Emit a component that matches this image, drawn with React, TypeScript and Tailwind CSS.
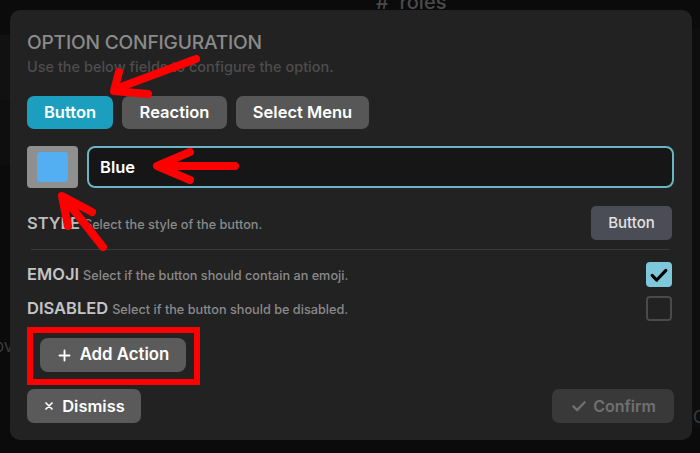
import React from "react";

function Check({ className, w = 3 }: { className?: string; w?: number }) {
  return (
    <svg viewBox="0 0 24 24" className={className} fill="none" stroke="currentColor" strokeWidth={w} strokeLinecap="round" strokeLinejoin="round">
      <path d="M4.5 12.5l5 5L19.5 7" />
    </svg>
  );
}

function Plus({ className }: { className?: string }) {
  return (
    <svg viewBox="0 0 24 24" className={className} fill="none" stroke="currentColor" strokeWidth={3} strokeLinecap="round">
      <path d="M12 4v16M4 12h16" />
    </svg>
  );
}

function Cross({ className }: { className?: string }) {
  return (
    <svg viewBox="0 0 24 24" className={className} fill="none" stroke="currentColor" strokeWidth={3.5} strokeLinecap="round">
      <path d="M6 6l12 12M18 6L6 18" />
    </svg>
  );
}

export default function App() {
  return (
    <div className="relative w-[700px] h-[453px] overflow-hidden bg-[#0b0b0b]" style={{ fontFamily: "Inter, 'Liberation Sans', sans-serif" }}>
      {/* background content hints */}
      <div className="absolute left-0 top-[35px] w-[10px] h-[65px] bg-[#111111]" />
      <div className="absolute left-0 top-[100px] w-[10px] h-[65px] bg-[#0e0e0e]" />
      <div className="absolute left-[692px] top-[28px] w-[8px] h-[400px] bg-[#0e0e0e]" />
      <div className="absolute left-[376px] top-[-13px] text-[20px] text-[#4a4a4a] font-medium">#&nbsp;&nbsp;roles</div>
      <div className="absolute left-[-6px] top-[334px] text-[17px] text-[#3a3a3a]">ov</div>
      <div className="absolute left-[693px] top-[405px] text-[17px] text-[#3a3a3a]">G</div>

      {/* modal */}
      <div className="relative ml-[10px] mt-[10px] w-[682px] h-[430px] rounded-[10px] bg-[#222222] pl-[17px] pr-[18px] pt-[20px] flex flex-col">
        <div className="text-[19.2px] leading-[24px] font-medium text-[#8a8a8a] tracking-[-0.2px]">OPTION CONFIGURATION</div>
        <div className="mt-[5px] text-[14.5px] leading-[16px] text-[#4d4d4d] font-medium">Use the below fields to configure the option.</div>

        <div className="mt-[21px] flex gap-[9px]">
          <div className="h-[33px] w-[86px] rounded-[7px] bg-[#1c9fbf] flex items-center justify-center text-[16.5px] font-semibold text-white">Button</div>
          <div className="h-[33px] w-[105px] rounded-[7px] bg-[#575757] flex items-center justify-center text-[16.5px] font-semibold text-white">Reaction</div>
          <div className="h-[33px] w-[133px] rounded-[7px] bg-[#575757] flex items-center justify-center text-[16.5px] font-semibold text-white">Select Menu</div>
        </div>

        <div className="mt-[17px] flex gap-[9px] items-center">
          <div className="h-[42px] w-[51px] rounded-[4px] bg-[#8f8f8f] flex items-center justify-center">
            <div className="h-[30px] w-[31px] rounded-[3px] bg-[#53aef2]" />
          </div>
          <div className="flex-1 h-[42px] rounded-[8px] border-2 border-[#6ab4c4] bg-[#161616] flex items-center pl-[11px] text-[16.5px] font-semibold text-white">Blue</div>
        </div>

        <div className="mt-[18px] flex items-center justify-between pr-[2px]">
          <div className="flex items-baseline gap-[4px]">
            <span className="text-[16.5px] font-semibold text-[#bdbdbd]">STYLE</span>
            <span className="text-[12.7px] font-medium text-[#8a8a8a]">Select the style of the button.</span>
          </div>
          <div className="h-[34px] w-[81px] rounded-[5px] bg-[#4a4d55] flex items-center justify-center text-[15px] font-medium text-[#e2e2e2]">Button</div>
        </div>

        <div className="mt-[9px] ml-[4px] mr-[4px] h-px bg-[#3b3b3b]" />

        <div className="mt-[12px] flex items-center justify-between pr-[2px]">
          <div className="flex items-baseline gap-[4px]">
            <span className="text-[16.5px] font-semibold text-[#c4c4c4]">EMOJI</span>
            <span className="text-[12.7px] font-medium text-[#8a8a8a]">Select if the button should contain an emoji.</span>
          </div>
          <div className="h-[25px] w-[26px] rounded-[4px] bg-[#7ec8dc] flex items-center justify-center text-black">
            <Check className="w-[22px] h-[22px]" w={3.4} />
          </div>
        </div>

        <div className="mt-[9px] flex items-center justify-between pr-[2px]">
          <div className="flex items-baseline gap-[4px]">
            <span className="text-[16.5px] font-semibold text-[#c4c4c4]">DISABLED</span>
            <span className="text-[12.7px] font-medium text-[#8a8a8a]">Select if the button should be disabled.</span>
          </div>
          <div className="h-[25px] w-[26px] rounded-[4px] border-2 border-[#4a4a4a]" />
        </div>

        <div className="mt-[6px] w-[173px] h-[58px] border-[6px] border-[#ff0000] pl-[7px] pt-[5px]">
          <div className="h-[34px] w-[146px] rounded-[8px] bg-[#5b5b5b] flex items-center justify-center gap-[8px] text-[16.8px] font-semibold text-white">
            <Plus className="w-[15px] h-[15px]" />
            <span>Add Action</span>
          </div>
        </div>

        <div className="mt-[4px] flex items-center justify-between">
          <div className="h-[34px] w-[114px] rounded-[7px] bg-[#5a5a5a] flex items-center justify-center gap-[7px] text-[16.5px] font-semibold text-white">
            <Cross className="w-[12px] h-[12px]" />
            <span>Dismiss</span>
          </div>
          <div className="h-[34px] w-[122px] rounded-[7px] bg-[#393939] flex items-center justify-center gap-[5px] text-[16px] font-semibold text-[#707070]">
            <Check className="w-[18px] h-[18px]" />
            <span>Confirm</span>
          </div>
        </div>
      </div>

      {/* red arrows annotations */}
      <svg className="absolute inset-0 pointer-events-none" width="700" height="453" viewBox="0 0 700 453" fill="none" stroke="#ff0000" strokeWidth={8} strokeLinecap="round" strokeLinejoin="round">
        <path d="M196 59 L118 88" />
        <path d="M119 72 L114 91 L148 94" />
        <path d="M235 166 L160 166" />
        <path d="M190 152 L157 166 L190 180" />
        <path d="M103 247 L65 199" />
        <path d="M68 226 L62 196 L92 212" />
      </svg>
    </div>
  );
}
